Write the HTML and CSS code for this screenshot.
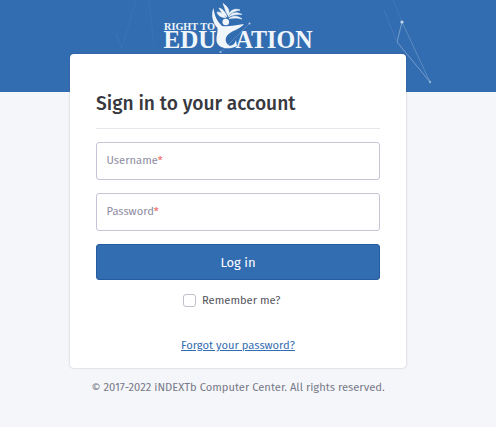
FILE: index.html
```html
<!DOCTYPE html>
<html lang="en">
<head>
    <meta charset="UTF-8">
    <meta name="viewport" content="width=device-width, initial-scale=1.0">
    <title>Sign in - Right to Education</title>
    <link rel="stylesheet" href="styles.css">
</head>
<body>
    <svg class="constellation" width="496" height="92" viewBox="0 0 496 92" fill="none" stroke="#fff">
        <path d="M136 0L122 48L116 34M149 0L154 46" stroke-opacity=".04"/>
        <path d="M393 0L402 22M384 10L396 40" stroke-opacity=".07"/>
        <path d="M402 22L430 82" stroke-opacity=".2"/>
        <path d="M402 22L397 42L430 82" stroke-opacity=".32"/>
        <circle cx="402" cy="22" r="1.6" fill="#c5d8ec" stroke="none"/>
        <circle cx="430" cy="82" r="1.2" fill="#8eb1d8" stroke="none"/>
    </svg>
    <div class="page">
        <header class="logo">
            <svg width="156" height="54" viewBox="160 0 156 54" fill="#f1f6fb">
                <g class="logo-text">
                    <text x="164" y="29.8" font-size="10.5" textLength="51" lengthAdjust="spacingAndGlyphs">RIGHT TO</text>
                    <text x="163.5" y="47.8" font-size="25.2" textLength="53" lengthAdjust="spacingAndGlyphs">EDU</text>
                    <text x="235.5" y="47.8" font-size="25.2" textLength="77" lengthAdjust="spacingAndGlyphs">ATION</text>
                </g>
                <!-- figure with raised arms, its body forms the C -->
                <path d="M213.5 8C214.5 16 217 21 222 26C228 27 236 25 244 24C240 29 234 30 230 33C225 36 224 42 229 45.5C232 46.5 235 44 236 40L237 46C229 50 218 49 216.5 41C216 36 218 33 217.5 28C212 22 211 14 213.5 8Z"/>
                <circle cx="225.8" cy="22" r="3.3"/>
                <path d="M217 12C221 12 224 14 226 18C221 17 218 16 217 12ZM219 8C223 9 226 13 227 17C223 15 221 12 219 8ZM223 3.5C228 7 230 10 228.5 16C225.5 12 225 8 223 3.5ZM228.5 15.5C230 10 235 8 240 10C235 11 232 12 228.5 15.5ZM228.5 17C232 12 237 12 242 14.5C237 14 232 15 228.5 17ZM229 18.5C234 15 238 16 242 19C237 17.5 233 18 229 18.5Z" stroke="#f1f6fb" stroke-width=".6"/>
                <path d="M221 52L250 23" fill="none" stroke="#fff" stroke-opacity=".25" stroke-width=".7"/>
                <circle cx="249.5" cy="23.5" r="1" fill="#b6cfe8"/>
                <circle cx="220.5" cy="52" r="1.1" fill="#9fbedf"/>
            </svg>
        </header>
        <form class="card">
            <h1>Sign in to your account</h1>
            <div class="field">Username<span>*</span></div>
            <div class="field">Password<span>*</span></div>
            <button type="button" class="login">Log in</button>
            <label class="remember"><input type="checkbox"><span>Remember me?</span></label>
            <a class="forgot" href="#">Forgot your password?</a>
        </form>
        <footer>© 2017-2022 iNDEXTb Computer Center. All rights reserved.</footer>
    </div>
</body>
</html>
```

FILE: styles.css
```css
* {
    box-sizing: border-box;
}
body {
    margin: 0;
    min-height: 427px;
    overflow: hidden;
    background: linear-gradient(#336db1 92px, #f5f6f9 92px);
    color: #777989;
    font-family: "Fira Sans", "Noto Sans", sans-serif;
    font-size: 11.2px;
}
.constellation {
    position: absolute;
    top: 0;
    left: 0;
}
.page {
    position: relative;
    width: 336px;
    margin-left: 70px;
}
.logo {
    display: flex;
    justify-content: center;
    height: 54px;
}
.logo-text {
    font-family: "Liberation Serif", serif;
    font-weight: bold;
}
.card {
    display: flex;
    flex-direction: column;
    height: 314px;
    padding: 34px 26px 0;
    background-color: #fff;
    border-radius: 4px;
    box-shadow: 0 0 2px rgba(40, 50, 70, 0.3);
}
h1 {
    height: 41px;
    margin: 0 0 13px;
    border-bottom: 1px solid #e6e6ed;
    color: #38383f;
    font-size: 19.2px;
    font-weight: 500;
    line-height: 31px;
    white-space: nowrap;
}
.field {
    height: 38px;
    margin-bottom: 12.6px;
    padding-left: 9.5px;
    border: 1px solid #c6c4d6;
    border-radius: 3px;
    color: #8d8ba1;
    line-height: 35px;
}
.field span {
    color: #f0655d;
}
.login {
    height: 36px;
    margin-top: 0.8px;
    border: 1px solid #265ba0;
    border-radius: 3px;
    background-color: #336db1;
    color: #fff;
    font-family: inherit;
    font-size: 13px;
    font-weight: 400;
    line-height: 34px;
    padding: 1px 0 0;
}
.remember {
    display: flex;
    align-items: center;
    gap: 6px;
    height: 13px;
    margin: 14px 0 0 87px;
    color: #55555d;
}
.remember input {
    appearance: none;
    width: 13px;
    height: 13px;
    margin: 0;
    border: 1px solid #c0bfc9;
    border-radius: 3px;
}
.forgot {
    align-self: center;
    margin-top: 31px;
    color: #336db1;
    line-height: 16px;
}
footer {
    margin-top: 12px;
    text-align: center;
    line-height: 16px;
    white-space: nowrap;
}
```
